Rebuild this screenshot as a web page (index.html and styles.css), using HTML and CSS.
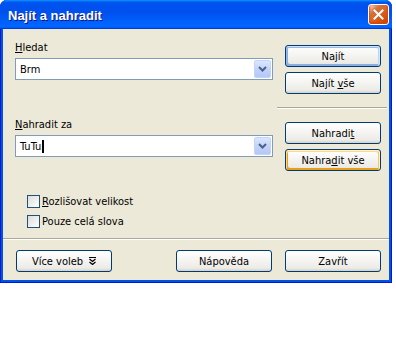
FILE: index.html
```html
<!DOCTYPE html>
<html lang="cs">
<head>
    <meta charset="UTF-8">
    <title>Najít a nahradit</title>
    <link rel="stylesheet" href="styles.css">
</head>
<body>
    <div class="window">
        <div class="titlebar">
            <span class="title">Najít a nahradit</span>
            <button class="close" aria-label="Zavřít">
                <svg width="11" height="11" viewBox="0 0 11 11"><path d="M1.5 1.5l8 8M9.5 1.5l-8 8" stroke="#fff" stroke-width="2" fill="none" stroke-linecap="square"/></svg>
            </button>
        </div>

        <div class="client">
            <div class="main">
                <div class="fields">
                    <label class="field-label"><u>H</u>ledat</label>
                    <div class="combo">
                        <span class="combo-text">Brm</span>
                        <span class="combo-btn">
                            <svg width="9" height="6" viewBox="0 0 9 6"><path d="M1 1l3.5 3.5L8 1" stroke="#4d6185" stroke-width="2" fill="none"/></svg>
                        </span>
                    </div>

                    <label class="field-label second"><u>N</u>ahradit za</label>
                    <div class="combo">
                        <span class="combo-text">TuTu<span class="caret"></span></span>
                        <span class="combo-btn">
                            <svg width="9" height="6" viewBox="0 0 9 6"><path d="M1 1l3.5 3.5L8 1" stroke="#4d6185" stroke-width="2" fill="none"/></svg>
                        </span>
                    </div>

                    <div class="options">
                        <label class="check"><span class="box"></span><span><u>R</u>ozlišovat velikost</span></label>
                        <label class="check"><span class="box"></span><span>Pouze celá slova</span></label>
                    </div>
                </div>

                <div class="actions">
                    <button class="btn default"><span>Na<u>j</u>ít</span></button>
                    <button class="btn"><span>Najít <u>v</u>še</span></button>
                    <div class="sep"></div>
                    <button class="btn"><span>Nahradi<u>t</u></span></button>
                    <button class="btn hot"><span>Nahra<u>d</u>it vše</span></button>
                </div>
            </div>

            <div class="divider"></div>

            <div class="footer">
                <button class="btn">
                    <span>Více voleb</span>
                    <svg class="more-icon" width="7" height="8" viewBox="0 0 7 8"><path d="M0 0.5h7M0.5 2l3 2.5 3-2.5M0.5 5l3 2.5 3-2.5" stroke="#000" stroke-width="1.2" fill="none"/></svg>
                </button>
                <div class="footer-right">
                    <button class="btn"><span>Nápověda</span></button>
                    <button class="btn"><span>Zavřít</span></button>
                </div>
            </div>
        </div>
    </div>
</body>
</html>
```

FILE: styles.css
```css
body {
    margin: 0;
    background: #fff;
    font-family: 'DejaVu Sans Condensed', 'Liberation Sans', sans-serif;
    font-size: 11px;
    color: #000;
}

.window {
    width: 392px;
    height: 283px;
    display: flex;
    flex-direction: column;
    background: #0054e3;
    border-radius: 7px 7px 0 0;
    box-shadow: inset 1px 0 #0019cf, inset -1px 0 #0019cf, inset 0 -1px #0019cf;
}

.titlebar {
    height: 29px;
    display: flex;
    align-items: center;
    justify-content: space-between;
    padding: 0 3px 0 8px;
    border-radius: 7px 7px 0 0;
    background: linear-gradient(180deg, #0997ff, #0053ee 8%, #0050ee 40%, #0066ff 88%, #0066ff 93%, #005bff 95%, #003dd7 96%, #003dd7);
}

.title {
    color: #fff;
    font-family: 'Liberation Sans', sans-serif;
    font-weight: bold;
    font-size: 13px;
    text-shadow: 1px 1px #0f1089;
    padding-top: 1px;
}

.close {
    width: 21px;
    height: 21px;
    padding: 0;
    display: flex;
    align-items: center;
    justify-content: center;
    border: 1px solid #fff;
    border-radius: 3px;
    background: radial-gradient(circle at 90% 90%, #cc4600 0, #dc6527 55%, #cd7546 70%, #ffccb2 90%, #fff 100%);
    box-shadow: inset 0 -1px 2px 1px #da4600;
}

.client {
    flex: 1;
    margin: 0 3px 3px 3px;
    background: #ece9d8;
    display: flex;
    flex-direction: column;
}

.main {
    flex: 1;
    display: flex;
    gap: 12px;
}

.fields {
    width: 258px;
    padding: 12px 0 0 12px;
}

.field-label {
    display: block;
    line-height: 13px;
    margin-bottom: 4px;
}

.field-label.second {
    margin-top: 38px;
}

.combo {
    height: 22px;
    box-sizing: border-box;
    border: 1px solid #7f9db9;
    background: #fff;
    display: flex;
    align-items: center;
    justify-content: space-between;
    padding: 1px;
}

.combo-text {
    padding-left: 3px;
    display: flex;
    align-items: center;
}

.caret {
    display: inline-block;
    width: 2px;
    height: 13px;
    margin-left: 1px;
    background: #000;
}

.combo-btn {
    width: 17px;
    height: 18px;
    box-sizing: border-box;
    display: flex;
    align-items: center;
    justify-content: center;
    border: 1px solid #c3d3fd;
    border-radius: 2px;
    background: linear-gradient(180deg, #dce7fe, #c1d3fb 50%, #b4c8f6);
}

.options {
    margin: 38px 0 0 12px;
    display: flex;
    flex-direction: column;
    gap: 7px;
}

.check {
    display: flex;
    align-items: center;
    gap: 2px;
    height: 13px;
}

.box {
    width: 13px;
    height: 13px;
    box-sizing: border-box;
    border: 1px solid #1c5180;
    background: linear-gradient(135deg, #dcdcd7, #fff);
}

.actions {
    width: 96px;
    padding: 16px 8px 0 0;
    display: flex;
    flex-direction: column;
    gap: 5px;
}

.sep {
    margin: 8px -6px 8px -8px;
    border-top: 1px solid #aca899;
    border-bottom: 1px solid #fff;
}

.btn {
    width: 96px;
    height: 22px;
    padding: 0;
    display: flex;
    align-items: center;
    justify-content: center;
    gap: 6px;
    font: inherit;
    color: #000;
    border: 1px solid #003c74;
    border-radius: 3px;
    background: linear-gradient(180deg, #fff, #ecebe6 86%, #d6d0c5);
}

.btn.default {
    box-shadow: inset -1px 1px #cee7ff, inset 1px 2px #98b8ea, inset -2px 2px #bcd4f6, inset 1px -1px #89ade4, inset 2px -2px #89ade4;
}

.btn.hot {
    box-shadow: inset -1px 1px #fff0cf, inset 1px 2px #fdd889, inset -2px 2px #fbc761, inset 2px -2px #e5a01a;
}

.divider {
    border-top: 1px solid #aca899;
    border-bottom: 1px solid #fff;
}

.footer {
    display: flex;
    justify-content: space-between;
    padding: 10px 8px 8px 13px;
}

.footer-right {
    display: flex;
    gap: 13px;
}
```
